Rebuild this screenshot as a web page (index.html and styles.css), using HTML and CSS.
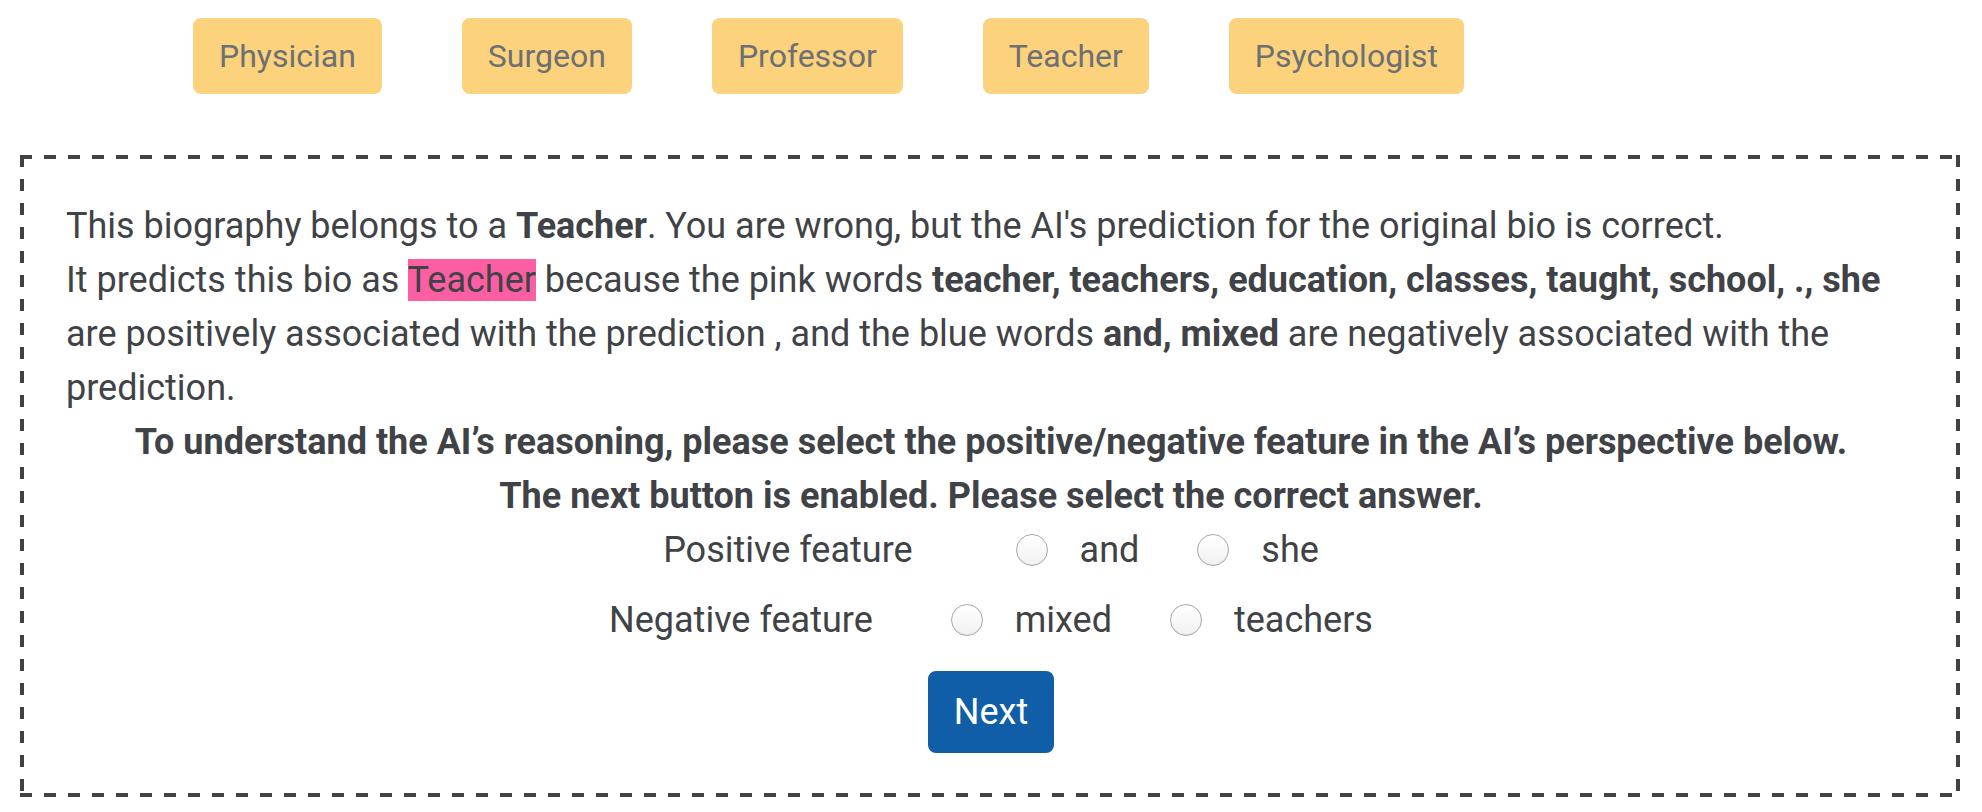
FILE: index.html
```html
<!DOCTYPE html>
<html lang="en">
<head>
<meta charset="utf-8">
<title>Biography task</title>
<link rel="stylesheet" href="styles.css">
</head>
<body>
<div class="page">
  <div class="occupations">
    <button class="occ-btn">Physician</button>
    <button class="occ-btn">Surgeon</button>
    <button class="occ-btn">Professor</button>
    <button class="occ-btn">Teacher</button>
    <button class="occ-btn">Psychologist</button>
  </div>
  <div class="task-box">
    <p class="bio-text">This biography belongs to a <b>Teacher</b>. You are wrong, but the AI's prediction for the original bio is correct.<br>It predicts this bio as <span class="hl-pink">Teacher</span> because the pink words <b>teacher, teachers, education, classes, taught, school, ., she</b> are positively associated with the prediction , and the blue words <b>and, mixed</b> are negatively associated with the prediction.</p>
    <p class="instruction">To understand the AI’s reasoning, please select the positive/negative feature in the AI’s perspective below.</p>
    <p class="instruction">The next button is enabled. Please select the correct answer.</p>
    <div class="feature-row feature-pos">
      <span class="feature-label">Positive feature</span>
      <label class="option"><input type="radio" name="pos" class="radio"><span>and</span></label>
      <label class="option"><input type="radio" name="pos" class="radio"><span>she</span></label>
    </div>
    <div class="feature-row feature-neg">
      <span class="feature-label">Negative feature</span>
      <label class="option"><input type="radio" name="neg" class="radio"><span>mixed</span></label>
      <label class="option"><input type="radio" name="neg" class="radio"><span>teachers</span></label>
    </div>
    <div class="actions">
      <button class="next-btn">Next</button>
    </div>
  </div>
</div>
</body>
</html>
```

FILE: styles.css
```css
html, body {
  margin: 0;
  padding: 0;
  background: #ffffff;
}

body {
  font-family: Roboto, "Liberation Sans", sans-serif;
  color: #3f4246;
  font-size: 36px;
  line-height: 54px;
}

.page {
  padding: 18px 22px 0 20px;
}

.occupations {
  display: flex;
  gap: 80px;
  padding-left: 173px;
}

.occ-btn {
  font-family: Roboto, "Liberation Sans", sans-serif;
  font-size: 32px;
  line-height: 48px;
  padding: 12px 24px;
  border: 2px solid #fdd27d;
  background: #fdd27d;
  color: #6c7073;
  border-radius: 8px;
  cursor: pointer;
}

.task-box {
  margin-top: 61px;
  padding: 44px 44px 44px 46px;
  background-image:
    repeating-linear-gradient(to right, #404246 0 12px, transparent 12px 24px),
    repeating-linear-gradient(to right, #404246 0 12px, transparent 12px 24px),
    repeating-linear-gradient(to bottom, #404246 0 12px, transparent 12px 24px),
    repeating-linear-gradient(to bottom, #404246 0 12px, transparent 12px 24px);
  background-size: 100% 4px, 100% 4px, 4px 100%, 4px 100%;
  background-position: left top, left bottom, left top, right top;
  background-repeat: no-repeat;
}

.bio-text {
  margin: 0;
}

.hl-pink {
  background: #fc5ea4;
}

.instruction {
  margin: 0;
  font-weight: 700;
  text-align: center;
}

.feature-row {
  display: flex;
  justify-content: center;
  align-items: center;
  height: 54px;
}

.feature-row + .feature-row {
  margin-top: 16px;
}

.feature-pos .feature-label {
  margin-right: 103px;
}

.feature-neg .feature-label {
  margin-right: 78px;
}

.option {
  display: flex;
  align-items: center;
  gap: 32px;
}

.option + .option {
  margin-left: 58px;
}

.radio {
  appearance: none;
  -webkit-appearance: none;
  width: 32px;
  height: 32px;
  margin: 0;
  border-radius: 50%;
  border: 1.5px solid #a9a9a9;
  background: linear-gradient(#ffffff, #f1f1f1);
  box-shadow: inset 0 -1px 1px rgba(0, 0, 0, 0.05);
}

.actions {
  margin-top: 24px;
  display: flex;
  justify-content: center;
}

.next-btn {
  font-family: Roboto, "Liberation Sans", sans-serif;
  font-size: 36px;
  line-height: 54px;
  padding: 12px 24px;
  border: 2px solid #115ea8;
  background: #115ea8;
  color: #ffffff;
  border-radius: 8px;
  cursor: pointer;
}
```
